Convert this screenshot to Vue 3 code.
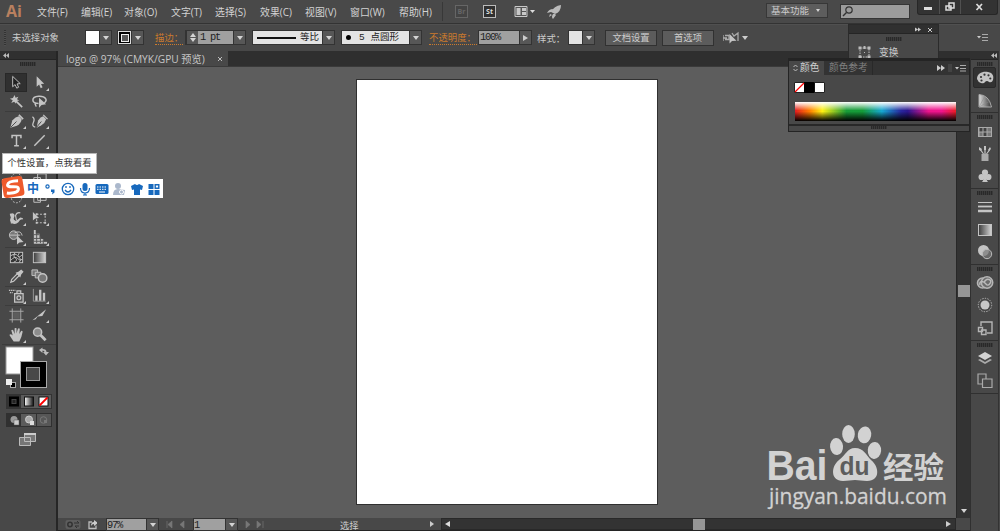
<script setup>
const menus = [
  ['文件(F)', 44], ['编辑(E)', 43], ['对象(O)', 47], ['文字(T)', 44], ['选择(S)', 45],
  ['效果(C)', 45], ['视图(V)', 45], ['窗口(W)', 49], ['帮助(H)', 46]
]

const light = '#c4c4c4'
const art = {
  select: `<path d="M6 2.5V13.5L8.6 11.2L10.3 15L12.3 14L10.6 10.5L14 10.2Z" fill="#222" stroke="${light}"/>`,
  direct: `<path d="M6 2.5V13.5L8.6 11.2L10.3 15L12.3 14L10.6 10.5L14 10.2Z" fill="${light}"/>`,
  wand: `<path d="M7 2l1 3 3-1-1.500 2.500 2.500 1.500-3 .5-.5 3-2-2.200-3 1.200 1.500-2.800L2 6l3.200-.7z" fill="${light}"/><path d="M8 8l7 7" stroke="${light}" stroke-width="1.800"/>`,
  lasso: `<path d="M8 11C0 11 0 4 8 3.500S18 8 14 10.500M5 10.500c-2 1 1 2 0 4" fill="none" stroke="${light}" stroke-width="1.600"/><path d="M8.500 5v10.500l2.700-2.700 4.800-.8z" fill="${light}"/>`,
  pen: `<path d="M2.500 15.500L4.500 8Q8 4 11.500 3.500L14.500 6.500Q14 10.500 9.500 13.500Z" fill="${light}"/><path d="M3 15l6-6" stroke="#484848"/><path d="M11.500 2l4.500 4.500" stroke="${light}" stroke-width="1.700"/>`,
  curve: `<path d="M6 15.500L7.500 8Q10 4 13 3.500L16 6.500Q15 10.500 11 13Z" fill="${light}"/><path d="M6 15l5-6" stroke="#484848"/><path d="M1.500 4q3 2 1 6t2 5M13 2l4.500 4.500" fill="none" stroke="${light}" stroke-width="1.400"/>`,
  type: `<path d="M4.300 6.500V3.700h9.400v2.800M9 4v10.500M6.500 14.500h5" fill="none" stroke="${light}" stroke-width="1.600"/>`,
  line: `<path d="M3.500 14.500L14.500 3.500" stroke="${light}" stroke-width="1.500"/>`,
  brush: `<path d="M3 15q1-6 6-6l6-6-5 8q-1 4-7 4" fill="${light}"/>`,
  pencil: `<path d="M4 14l2-5 7-6 2 2-7 7z" fill="${light}"/>`,
  rotate: `<circle cx="9" cy="8" r="5.500" fill="none" stroke="${light}" stroke-dasharray="2 1.500"/>`,
  scale: `<path d="M3 7h7v6H3zM7 3h9v8H7z" fill="none" stroke="${light}"/>`,
  warp: `<path d="M2 4q5-2 5 2L6 9q0 3 3 2l4-3q3 0 3 2-3-1-5 3-3 3-7 1-3-2-1-6L2 5" fill="${light}"/><path d="M9 11l-1-5q1-4 5-3M3 14l4-3" fill="none" stroke="${light}" stroke-width="1.200"/>`,
  free: `<path d="M2 2v9l2.500-2 4-.5z" fill="${light}"/><path d="M6 4.500h9v9H6z" fill="none" stroke="${light}" stroke-dasharray="2 1.600"/><path d="M5 3.500h2v2H5zm9 0h2v2h-2zm-9 9h2v2H5zm9 0h2v2h-2z" fill="${light}"/>`,
  shape: `<circle cx="6" cy="6.500" r="4.500" fill="#777" stroke="${light}"/><path d="M2 6.500h11M7 4q7-3 8 3" fill="none" stroke="${light}"/><path d="M9.500 7v9.500l2.600-2.200 4.400-.5z" fill="${light}"/>`,
  perspective: `<path d="M3 1v14.500h14v-2h-4v-3H9V5H5V1z" fill="${light}"/><path d="M3 6h6M3 10h9M3 13h14M6 4v11M10 8v7M13 11v5" stroke="#555"/>`,
  mesh: `<rect x="2.500" y="3.500" width="13" height="11" fill="#353535" stroke="${light}"/><path d="M3 7q5-3 7 0t5-1M3 12q4-5 7-2t5 1M7 4q-2 4 1 6t-2 4M12 4q-3 3 0 5t0 5" fill="none" stroke="${light}"/>`,
  gradient: `<defs><linearGradient id="tg"><stop stop-color="#3b3b3b"/><stop offset="1" stop-color="#d5d5d5"/></linearGradient></defs><rect x="2.500" y="3.500" width="13" height="11" fill="url(#tg)" stroke="${light}"/>`,
  dropper: `<path d="M3 15l1-3 6-6 2 2-6 6z" fill="none" stroke="${light}" stroke-width="1.300"/><path d="M8 5l3-1 3-2.500 2.500 2.500-2.500 3-1 3z" fill="${light}"/>`,
  blend: `<path d="M1 2h6v6H1z" fill="#777" stroke="${light}"/><path d="M4.500 4.500h6v6h-6z" fill="#777" stroke="${light}"/><circle cx="12.300" cy="10.500" r="4.500" fill="#777" stroke="${light}" stroke-width="1.500"/>`,
  spray: `<path d="M7 7h9v9H7zM9.500 4h4v3h-4z" fill="#595959" stroke="${light}" stroke-width="1.300"/><circle cx="11.500" cy="11.500" r="2" fill="none" stroke="${light}" stroke-width="1.300"/><path d="M1 3.500h7M2 6h3" stroke="${light}" stroke-width="1.400" stroke-dasharray="1.500 .7"/>`,
  graph: `<path d="M2.500 2v13h13" fill="none" stroke="#999"/><path d="M4.500 9h2.500v5.500H4.500zm4-6h2.500v11.500H8.500zM12.500 6h2.500v8.500h-2.500z" fill="${light}"/>`,
  artboard: `<path d="M4.500 1.500v15M13.500 1.500v15M1.500 4.500h15M1.500 13.500h15" stroke="#aaa"/><path d="M5.500 5.500h7v7h-7z" fill="#5d5d5d"/>`,
  slice: `<path d="M1.500 14L16 2.500l-4 7-5 .5-2 3z" fill="${light}"/>`,
  hand: `<path d="M6 16.500Q3 12 1.500 9.500q1-1.500 3.500.5L3.500 4.500q1-1 2 0L7 8.500V2.500q1-1 2 0v5.500l1.500-5q1-1 2 0L12 8.500l2-3.500q1.500 0 1.500 1-1 6-3.500 10.500z" fill="${light}"/>`,
  zoom: `<circle cx="7" cy="6.500" r="4.300" fill="#8d8d8d" stroke="${light}" stroke-width="1.600"/><path d="M10 9.500l5.500 5.500" stroke="${light}" stroke-width="3"/>`,
  palette: `<path d="M1 10C1 4 7 2 12 3s6 4 5 8q-1 3-4 2-2-2-4 0-1 2-4 1t-4-4" fill="${light}"/><g fill="#343434"><circle cx="5" cy="8" r="1.100"/><circle cx="8.500" cy="5.700" r="1.100"/><circle cx="12.500" cy="6.300" r="1.100"/><circle cx="14.300" cy="9.500" r="1.100"/><circle cx="5.500" cy="11.500" r="1.100"/></g>`,
  guide: `<defs><linearGradient id="gg" x1="0" x2="1"><stop stop-color="#ddd"/><stop offset="1" stop-color="#333"/></linearGradient></defs><path d="M3 2.500Q13 3 15.500 15H3z" fill="url(#gg)" stroke="#aaa"/><path d="M3 15L9 4M3 15l11-6" stroke="#888" stroke-width=".5"/>`,
  swatches: `<rect x="2" y="4" width="14" height="10" fill="#aaa"/><path d="M3.500 5h3v3.500h-3zm4 0h3v3.500h-3zm0 4.500h3V13h-3z" fill="#424242"/><path d="M11.500 5h3.500v3.500h-3.500zM3.500 9.500h3V13h-3zm8 0H15V13h-3.500z" fill="#777"/>`,
  brushes: `<path d="M5.500 9h7v7h-7z" fill="#aaa"/><path d="M7.500 9L4 4M9 9V3M10.500 9l3-4" stroke="${light}" stroke-width="1.200"/><path d="M3 2l3 2-1 2-2-1zm5-1h2v4H8zm6 1l1 2-2 2-1-1z" fill="${light}"/>`,
  club: `<g fill="${light}"><circle cx="9" cy="5.500" r="3.100"/><circle cx="5.600" cy="10" r="3.100"/><circle cx="12.400" cy="10" r="3.100"/><path d="M8 8h2q0 5 2 7H6q2-2 2-7"/></g>`,
  stroke: `<path d="M2 4.500h14" stroke="${light}"/><path d="M2 8.500h14" stroke="${light}" stroke-width="1.800"/><path d="M2 13h14" stroke="${light}" stroke-width="2.500"/>`,
  transparency: `<circle cx="7.500" cy="7.500" r="5.500" fill="#c4c4c4"/><circle cx="11" cy="11" r="4.700" fill="#777" fill-opacity=".7" stroke="#bbb"/>`,
  cc: `<rect x="1.500" y="4" width="10" height="10" rx="5" fill="#6c6c6c" stroke="#b5b5b5" stroke-width="1.600"/><circle cx="11" cy="8.500" r="5.700" fill="#6c6c6c" stroke="#b5b5b5" stroke-width="1.600"/><path d="M4 11q-1-3 2-3.500 2 0 4 2.500t4-.5-1-4q-3-1-5 3" fill="none" stroke="#bbb" stroke-width="1.400"/>`,
  appearance: `<circle cx="9" cy="9" r="4.500" fill="#c8c8c8"/><circle cx="9" cy="9" r="6.700" fill="none" stroke="#bbb" stroke-dasharray="1.300 1.300"/>`,
  styles: `<path d="M5 7V3h11v11h-5M2.500 8.500h4v4h-4zM5.500 11h4.500v4.500H5.500z" fill="none" stroke="#b5b5b5" stroke-width="1.400"/>`,
  layers: `<path d="M9 2l7 4-7 4-7-4z" fill="#d4d4d4"/><path d="M2 10l7 4 7-4-2-1-5 3-5-3z" fill="#aaa"/>`,
  boards: `<path d="M2 2h8v10H2z" fill="#484848" stroke="#aaa" stroke-width="1.200"/><path d="M6.500 7h9.500v8.500H6.500z" fill="#484848" stroke="#aaa" stroke-width="1.200"/>`
}

const tools = [
  ['select', 'direct'], ['wand', 'lasso'], ['pen', 'curve'], ['type', 'line'],
  ['brush', 'pencil'], ['rotate', 'scale'], ['rotate', 'scale'], ['warp', 'free'],
  ['shape', 'perspective'], ['mesh', 'gradient'], ['dropper', 'blend'], ['spray', 'graph'],
  ['artboard', 'slice'], ['hand', 'zoom']
]
const ruled = [2, 9, 11, 12]
const plain = ['select', 'wand', 'lasso', 'mesh', 'gradient', 'blend', 'artboard', 'zoom']
const dock = [
  ['palette', 'guide'], ['swatches', 'brushes', 'club'], ['stroke', 'gradient', 'transparency'],
  ['cc', 'appearance', 'styles'], ['layers', 'boards']
]
</script>

<template>
  <div class="app">
    <header class="menubar">
      <span class="brand">Ai</span>
      <nav><span v-for="m in menus" :key="m[0]" :style="{ width: m[1] + 'px' }">{{ m[0] }}</span></nav>
      <div class="apps">
        <span class="badge dim">Br</span><span class="badge">St</span>
        <svg class="arrange" width="22" height="14"><path d="M1 1.500h12v10H1z" fill="#555" stroke="#c8c8c8"/><path d="M2.500 3h4v7h-4zM8 3h4v3H8zM8 7h4v3H8z" fill="#c8c8c8"/><path d="M16 5h5l-2.500 3z" fill="#ddd"/></svg>
        <svg class="rocket" width="15" height="14"><path d="M14 0Q7 1 4 7l4 2Q14 7 14 0M0 8q2-4 6-4L4 7M8 9l1 1-3 4q-2-2 0-5M3 9l2 1-3 2z" fill="#bbb"/></svg>
      </div>
      <div class="menu-right">
        <span class="workspace">基本功能<i class="down"></i></span>
        <span class="search"><svg width="14" height="13"><circle cx="8" cy="5" r="3.200" fill="none" stroke="#333" stroke-width="1.200"/><path d="M5.500 7.500L2 11" stroke="#333" stroke-width="1.500"/></svg></span>
        <div class="window-buttons">
          <span class="min"><svg width="8" height="4"><path d="M0 0h8v3H0z" fill="#ddd"/></svg></span>
          <span><svg width="11" height="10"><path d="M4 1h5v5H4zM1 4h5v4H1z" fill="#333" stroke="#ddd" stroke-width="1.500"/></svg></span>
          <span class="shut"><svg width="9" height="8"><path d="M1.500 1l5.500 6M7 1L1.500 7" stroke="#ddd" stroke-width="1.700"/></svg></span>
        </div>
      </div>
    </header>

    <section class="control">
      <i class="vgrip"></i>
      <span class="status">未选择对象</span>
      <span class="box fill"><b class="white"></b><em><i class="down"></i></em></span>
      <span class="box outline"><b class="black"></b><em><i class="down"></i></em></span>
      <span class="link l1">描边：</span>
      <span class="box weight"><em class="spin"><i class="up"></i><i class="down"></i></em><b class="gray">1 pt</b><em><i class="down"></i></em></span>
      <span class="box profile"><b class="pale"><u></u>等比</b><em><i class="down"></i></em></span>
      <span class="box brush"><b class="pale"><s></s>5 点圆形</b><em><i class="down"></i></em></span>
      <span class="link l2">不透明度：</span>
      <span class="box opacity"><b class="gray">100%</b><em><i class="right"></i></em></span>
      <span class="label">样式：</span>
      <span class="box style"><b class="pale"></b><em><i class="down"></i></em></span>
      <span class="button">文档设置</span>
      <span class="button">首选项</span>
      <svg class="align" width="26" height="14"><path d="M0 4v6M0 7h4M2 4.500h4v4H2M9 2l2 3 4-3v8" fill="none" stroke="#aaa" stroke-width="1.300"/><path d="M6.500 3v9.500l2.500-2.500 4.500-.3z" fill="#c4c4c4"/><path d="M19 5h6l-3 4z" fill="#ccc"/></svg>
      <svg class="list" width="12" height="9"><path d="M0 3h4L2 5.500z" fill="#ccc"/><path d="M5 1.500h6M5 4.500h6M5 7.500h6" stroke="#aaa"/></svg>
    </section>

    <main>
      <aside class="toolbox">
        <div class="cap"><svg width="6" height="5"><path d="M3 0v5L0 2.500zM6 0v5L3 2.500z" fill="#bbb"/></svg></div>
        <i class="grip"></i>
        <div class="tools">
          <div v-for="(row, r) in tools" :key="r" class="tool-row" :class="{ ruled: ruled.includes(r) }">
            <span v-for="t in row" :key="t" class="tool" :class="{ active: t === 'select', more: !plain.includes(t) }"><svg width="17" height="17" viewBox="0 0 18 18" v-html="art[t]"></svg></span>
          </div>
        </div>
        <svg class="paint" width="54" height="106">
          <g>
            <rect x="4" y="2" width="27" height="27" fill="#fff" stroke="#999"/>
            <rect x="18.500" y="16.500" width="26" height="26" fill="#000" stroke="#aaa"/>
            <rect x="24.500" y="22.500" width="13" height="13" fill="#484848" stroke="#999"/>
            <path d="M37 5l3.500-2.500v1.500q4 0 4 3H47l-3 3.500-3-3.500h1.500q0-1.500-2-1.500V8z" fill="#bbb"/>
            <rect x="8.500" y="37.500" width="5" height="5" fill="#000" stroke="#aaa"/><rect x="4" y="34" width="6" height="6" fill="#eee"/>
          </g>
          <g>
            <rect x="4" y="49" width="46" height="15" fill="#333"/><rect x="19" y="50" width="30" height="13" fill="#5b5b5b"/>
            <rect x="7" y="51.500" width="10" height="10" fill="#000"/><rect x="10" y="54.500" width="4" height="4" fill="#222" stroke="#444"/>
            <rect x="22.500" y="52" width="9" height="9" fill="url(#mini)" stroke="#111"/>
            <rect x="37" y="52" width="9" height="9" fill="#fff" stroke="#111"/><path d="M37.500 60.500l8-8" stroke="red" stroke-width="1.800"/>
          </g>
          <g>
            <rect x="4" y="68" width="46" height="14" fill="#303030"/><rect x="19" y="69" width="15" height="12" fill="#5b5b5b"/><rect x="35" y="69" width="14" height="12" fill="#575757"/>
            <circle cx="12" cy="74.500" r="3.500" fill="#999"/><path d="M12 75h5v5h-5z" fill="#ccc" stroke="#555" stroke-width=".5"/>
            <circle cx="27" cy="74.500" r="3.500" fill="#aaa" stroke="#ccc"/><path d="M28 76h4v4h-4z" fill="#ddd"/>
            <circle cx="41.500" cy="75" r="3.300" fill="none" stroke="#777"/><path d="M42 75h3v3h-3z" fill="#777"/>
          </g>
          <path d="M17.500 92.500h11v8h-11zM22.500 88.500h11v8h-11z" fill="#777" stroke="#bbb"/><path d="M22 88h12v2H22z" fill="#ccc"/>
          <defs><linearGradient id="mini"><stop stop-color="#fff"/><stop offset="1" stop-color="#111"/></linearGradient></defs>
        </svg>
      </aside>

      <section class="document">
        <div class="tabs"><span>logo @ 97% (CMYK/GPU 预览)<svg width="6" height="6"><path d="M1 1l4 4M5 1L1 5" stroke="#bbb"/></svg></span></div>
        <div class="stage"><div class="canvas"><div class="page"></div></div><div class="vscroll"><i class="thumb"></i><i class="down big"></i></div></div>
        <footer>
          <svg class="sync" width="32" height="13"><rect x=".5" y="2" width="15" height="9" rx="2" fill="#5d5d5d"/><circle cx="5" cy="6.500" r="2.200" fill="none" stroke="#333" stroke-width="1.500"/><path d="M9 5h5l-2-2M14 8h-4l2 2" fill="none" stroke="#333"/><path d="M31 7.500v3h-7V4h3" fill="none" stroke="#bbb" stroke-width="1.300"/><path d="M26 8q0-4 3-4V2l4 3-4 3V6q-2 0-3 2" fill="#ccc"/></svg>
          <span class="box percent"><b class="gray">97%</b><em><i class="down big"></i></em></span>
          <svg width="33" height="13" class="nav"><path d="M7 3v7M12 3v7L8 6.500zM24 3v7l-4-3.500z" fill="#777" stroke="#777" stroke-width=".7"/></svg>
          <span class="box pageno"><b class="gray">1</b><em><i class="down big"></i></em></span>
          <svg width="34" height="13" class="nav"><path d="M7 3v7l4-3.500zM18 3v7l4-3.500zM24 3v7" fill="#777" stroke="#777" stroke-width=".7"/></svg>
          <span class="mode">选择</span>
          <i class="right"></i>
          <div class="hscroll"><i class="left"></i><i class="thumb"></i><i class="right"></i></div>
          <div class="corner"></div>
        </footer>
      </section>

      <aside class="dock">
        <div class="cap"><svg width="6" height="5"><path d="M3 0v5L0 2.500zM6 0v5L3 2.500z" fill="#bbb"/></svg></div>
        <div v-for="(g, i) in dock" :key="i" class="dock-group">
          <i class="grip"></i>
          <span v-for="n in g" :key="n" :class="{ chosen: n === 'palette' }"><svg width="18" height="18" viewBox="0 0 18 18" v-html="art[n]"></svg></span>
        </div>
      </aside>
    </main>

    <div class="transform-panel">
      <div class="cap"><svg width="21" height="6"><path d="M1 .5v4l3-2zM4 .5v4l3-2z" fill="#ccc"/><path d="M14 1l4 4M18 1l-4 4" stroke="#ccc"/></svg></div>
      <i class="grip"></i>
      <div class="item"><svg width="13" height="13"><path d="M2 2h9v9H2z" fill="none" stroke="#bbb" stroke-dasharray="1.500 1"/><path d="M.5.5h3v3h-3zm9 0h3v3h-3zm-9 9h3v3h-3zm9 0h3v3h-3zM5.500 0h2v3h-2zM6 6h1v1H6z" fill="#bbb"/></svg>变换</div>
    </div>

    <div class="color-panel">
      <div class="panel-tabs">
        <span class="on"><svg width="5" height="8"><path d="M.5 3l2-2 2 2M.5 5l2 2 2-2" fill="none" stroke="#bbb"/></svg>颜色</span><span class="off">颜色参考</span>
        <svg class="controls" width="33" height="10"><path d="M1 2v6l4-3zM5 2v6l4-3zM19 4h4l-2 2.500z" fill="#ccc"/><path d="M13 1v8M15 1v8" stroke="#555"/><path d="M24 2.500h6M24 5.500h6M24 8h6" stroke="#aaa"/></svg>
      </div>
      <div class="panel-body">
        <svg width="32" height="12"><path d="M.5.5h10v10H.5zM20.500.5h10v10h-10z" fill="#fff" stroke="#222"/><path d="M10 0h10.500v11H10z"/><path d="M1 10L10 1" stroke="red" stroke-width="1.200"/></svg>
        <div class="spectrum"></div>
      </div>
      <div class="panel-foot"><i class="grip"></i></div>
    </div>

    <div class="tip">个性设置，点我看看</div>
    <div class="ime">
      <svg width="24" height="24" viewBox="0 0 24 24" class="sogou"><g transform="rotate(-9 12 12)"><rect x="1.500" y="2" width="21" height="20" rx="3.500" fill="#ee5a2c"/><path d="M18 6.500Q8 5 7 9c-1 4 11 1 10 6-1 4-9 3-12 2" fill="none" stroke="#fff" stroke-width="3"/></g></svg>
      <span><b>中</b></span>
      <span><svg width="12" height="14"><circle cx="3.500" cy="4.500" r="1.600" fill="none" stroke="#1769bd" stroke-width="1.200"/><path d="M7 7.500h3.500v3L8 12.500 8.500 10H7z" fill="#1769bd"/></svg></span>
      <span><svg width="14" height="14" fill="none" stroke="#1769bd" stroke-width="1.300"><circle cx="7" cy="7" r="5.700"/><path d="M4 8q3 4 6 0M5 4v2M9 4v2"/></svg></span>
      <span><svg width="12" height="14"><rect x="3.500" y="1" width="5" height="8" rx="2.500" fill="#1769bd"/><path d="M1.500 6q0 5 4.500 5t4.500-5M6 11v2M4 13h4" fill="none" stroke="#1769bd" stroke-width="1.200"/></svg></span>
      <span><svg width="14" height="14"><rect x=".5" y="2" width="13" height="10" rx="1.500" fill="#1769bd"/><path d="M2 5h10M2 7.300h10" stroke="#fff" stroke-dasharray="1.500 1"/><path d="M4 10h6" stroke="#fff"/></svg></span>
      <span><svg width="14" height="14" fill="#abb8cc"><circle cx="6" cy="4" r="3"/><path d="M1 13q0-6 5-6l7 1-1 5z"/><circle cx="9.500" cy="10" r="2" stroke="#fff"/></svg></span>
      <span><svg width="12" height="14"><path d="M4 2q2 2 4 0l4 2-1 4-2-.5V13H3V7.500L1 8 0 4z" fill="#1769bd"/></svg></span>
      <span><svg width="12" height="14" fill="#1769bd"><path d="M.5 2h5v5h-5zm0 6h5v5h-5zm6 0h5v5h-5z"/><path d="M7.200 2.700h3.600v3.600H7.200z" fill="#fff" stroke="#1769bd" stroke-width="1.400"/></svg></span>
    </div>

    <svg class="watermark" width="190" height="95" viewBox="0 0 190 95" fill="#d2d2d2">
      <text x="5.500" y="60" class="bai" textLength="61" lengthAdjust="spacingAndGlyphs">Bai</text>
      <ellipse cx="75.500" cy="26.500" rx="6.500" ry="8.500" transform="rotate(-5 76 26)"/>
      <ellipse cx="87.500" cy="14" rx="6.300" ry="9"/>
      <ellipse cx="103.500" cy="15" rx="6.700" ry="8.500" transform="rotate(10 104 15)"/>
      <ellipse cx="113.500" cy="30.500" rx="6.700" ry="8.500" transform="rotate(5 114 30)"/>
      <path d="M94 28c9 0 11 7 16 12 8 6 10 21-4 21-5 0-8-1-12-1s-7 1-12 1c-13 0-12-15-4-21 7-5 8-12 16-12"/>
      <text x="78.500" y="55" class="du" textLength="30" lengthAdjust="spacingAndGlyphs">du</text>
      <text x="122" y="58" class="cn" textLength="61" lengthAdjust="spacingAndGlyphs">经验</text>
      <text x="8" y="83.500" class="url" textLength="178" lengthAdjust="spacingAndGlyphs">jingyan.baidu.com</text>
    </svg>
  </div>
</template>

<style>
body { margin: 0; overflow: hidden; background: #484848; }
</style>
<style scoped>
* { box-sizing: border-box; }
svg { display: block; flex: none; }
i { display: block; flex: none; }
.app { position: relative; width: 1000px; height: 531px; display: flex; flex-direction: column; overflow: hidden; background: #484848; color: #ccc; font: 9.5px "Open Sans", "Noto Sans CJK SC", sans-serif; white-space: nowrap; }
.menubar { height: 24px; flex: none; display: flex; border-bottom: 1px solid #333; background: #494949; }
.brand { width: 37px; padding-left: 6px; font: bold 16px/22px "Open Sans", sans-serif; color: #b9805f; }
.menubar nav { display: flex; line-height: 24px; font-size: 9.9px; color: #d3d3d3; }
.apps { display: flex; align-items: center; margin-left: -3px; border-left: 1px solid #383838; height: 19px; margin-top: 2px; padding-left: 12px; }
.badge { width: 13px; height: 13px; border: 1px solid #bbb; background: #303030; color: #ddd; font: bold 7px/11px "Open Sans", sans-serif; text-align: center; margin-right: 15px; }
.badge.dim { border-color: #666; color: #666; background: #444; }
.arrange { margin-left: 3px; }
.rocket { margin-left: 11px; }
.menu-right { margin-left: auto; display: flex; }
.workspace { display: flex; align-items: center; justify-content: space-between; width: 62px; height: 15px; margin: 3px 12px 0 0; padding: 0 7px 1px 4px; background: #5d5d5d; border: 1px solid #373737; font-size: 9.5px; }
.search { width: 70px; height: 15px; margin: 4px 7px 0 0; background: #9c9c9c; border: 1px solid #353535; }
.window-buttons { display: flex; width: 81px; height: 15px; margin-right: 2px; background: #333; border: 1px solid #272727; border-top: 0; border-radius: 0 0 3px 3px; }
.window-buttons span { width: 22px; display: flex; align-items: center; justify-content: center; border-right: 1px solid #505050; }
.window-buttons .min { align-items: flex-end; padding-bottom: 3px; }
.window-buttons .shut { width: 36px; border: 0; }

.down, .up { width: 0; height: 0; border: solid transparent; border-width: 4px 3px 0; border-top-color: #d4d4d4; }
.up { border-width: 0 3px 4px; border-bottom-color: #d4d4d4; }
.workspace .down { border-width: 3px 2.500px 0; }
.right { width: 0; height: 0; border-left: 5px solid #ccc; border-top: 3.500px solid transparent; border-bottom: 3.500px solid transparent; }
.left { width: 0; height: 0; border-right: 5px solid #ddd; border-top: 3.500px solid transparent; border-bottom: 3.500px solid transparent; }
.big { border-top-width: 4px; border-left-width: 3.500px; border-right-width: 3.500px; }
.control { height: 27px; flex: none; display: flex; align-items: center; font-size: 9.4px; padding: 0 11px 1px 4px; border-top: 1px solid #505050; }
.vgrip { width: 2px; height: 16px; background: repeating-linear-gradient(#333 0 1px, #505050 1px 2px); }
.status { width: 73px; margin-left: 6px; padding-bottom: 2px; }
.box { display: flex; height: 15px; border: 1px solid #333; background: #333; flex: none; }
.box b { flex: 1; font: 10.400px/13px "Liberation Mono", "Noto Sans CJK SC", monospace; color: #222; overflow: hidden; }
.box em { width: 11px; display: flex; flex-direction: column; align-items: center; justify-content: center; background: #575757; margin-left: 1px; }
.fill, .outline { width: 27px; margin-right: 5px; }
.white { background: #fff; }
.black { background: #000; border: 1px solid #ddd; display: flex; align-items: center; justify-content: center; }
.black::after { content: ""; width: 6px; height: 6px; background: #555; border: 1.500px solid #eee; }
.link { color: #cb7b2e; border-bottom: 1px dotted #cb7b2e; height: 14px; line-height: 14px; }
.l1 { width: 28px; margin-left: 6px; }
.weight { width: 61px; margin-left: 2px; }
.weight b { padding-left: 2px; letter-spacing: -1.200px; }
.spin { gap: 1px; margin: 0; }
.gray { background: #a0a0a0; }
.pale { background: #e3e3e3; }
.profile { width: 83px; margin-left: 6px; }
.profile b, .brush b { display: flex; align-items: center; padding-left: 4px; font-size: 9.500px; }
.profile u { width: 39px; height: 2px; background: #111; margin-right: 4px; }
.brush { width: 81px; margin-left: 6px; }
.brush s { width: 5px; height: 5px; border-radius: 50%; background: #000; margin-right: 8px; }
.l2 { margin-left: 7px; width: 48px; }
.opacity { width: 54px; margin-left: 1px; }
.opacity b { padding-left: 1px; letter-spacing: -1.200px; }
.label { width: 31px; margin-left: 5px; }
.style { width: 27px; margin-right: 10px; }
.button { width: 52px; height: 16px; line-height: 13px; text-align: center; background: #5c5c5c; border: 1px solid #313131; margin-right: 5px; font-size: 9.3px; }
.align { margin-left: 4px; }
.list { margin-left: auto; }

main { flex: 1; display: flex; min-height: 0; }
.cap { height: 9px; background: #303030; border-bottom: 1px solid #252525; padding: 2px 3px; flex: none; }
.grip { width: 16px; height: 4px; margin: 2px auto; background: repeating-linear-gradient(90deg, #292929 0 1px, #3a3a3a 1px 2px); }
.toolbox { width: 58px; flex: none; border-right: 2px solid #262626; background: #484848; }
.toolbox .grip { margin-bottom: 6.300px; }
.tool-row { height: 19.400px; display: flex; margin: 0 5px; border-top: 1px solid transparent; }
.ruled { border-color: #3c3c3c; }
.tool { width: 23.500px; height: 18.400px; position: relative; display: flex; align-items: center; justify-content: center; }
.active { background: #303030; border: 1px solid #282828; width: 22px; margin-right: 1.500px; }
.more::after { content: ""; position: absolute; right: 2px; bottom: 1px; border-left: 3px solid transparent; border-bottom: 3px solid #ccc; }
.paint { margin-left: 2px; border-top: 1px solid #3c3c3c; }

.document { width: 912px; flex: none; display: flex; flex-direction: column; }
.tabs { height: 15px; flex: none; display: flex; background: #2f2f2f; }
.tabs span { width: 170px; height: 15px; padding: 0 5px 0 8px; display: flex; align-items: center; justify-content: space-between; background: #484848; font-size: 10.200px; color: #c6c6c6; }
.stage { flex: 1; display: flex; }
.canvas { width: 898px; background: #5d5d5d; border-top: 1px solid #3a3a3a; padding: 13px 0 0 298px; }
.page { width: 302px; height: 426px; background: #fff; border: 1px solid #303030; margin-top: -1px; }
.vscroll { width: 14px; background: #333; border-left: 1px solid #282828; display: flex; flex-direction: column; align-items: center; }
.vscroll .thumb { width: 12px; height: 12px; margin-top: 219px; background: #969696; }
.vscroll .big { margin-top: auto; margin-bottom: 5px; }
footer { height: 13px; flex: none; display: flex; background: #484848; border-bottom: 1px solid #242424; }
.sync { margin: 0 9px 0 7px; }
footer .box { height: 13px; }
footer .gray { line-height: 12px; letter-spacing: -1.200px; }
.percent { width: 53px; }
.nav { margin-left: 1px; }
.pageno { width: 45px; }
.mode { width: 147px; padding-left: 67px; font-size: 9.300px; line-height: 15px; flex: none; }
footer > .right { margin: 3px 6px 0 10px; border-left-width: 4px; }
.hscroll { margin-left: auto; flex: none; width: 515px; background: #333; border: 1px solid #292929; display: flex; align-items: center; padding: 0 4px 0 3px; }
.hscroll .thumb { width: 12px; height: 11px; margin-left: 243px; background: #969696; }
.hscroll .right { margin-left: auto; }
.corner { width: 14px; flex: none; }
.dock { width: 29px; border-left: 1px solid #303030; border-right: 1px solid #333; background: #484848; }
.dock .cap { padding-left: 20px; }
.dock-group { border-bottom: 1px solid #303030; padding-bottom: .600px; }
.dock-group .grip { margin: 2px auto 1px; }
.dock-group > span { height: 22.400px; display: flex; align-items: center; justify-content: center; }
.dock-group .chosen { height: 21px; margin: 0 2px 1.400px; background: #323232; border: 1px solid #292929; border-radius: 2px; }

.transform-panel { position: absolute; left: 848px; top: 24px; width: 91px; height: 40px; background: #484848; border: 1px solid #2b2b2b; }
.transform-panel .cap { padding-left: 65px; }
.transform-panel .grip { margin-top: 3px; }
.item { display: flex; align-items: center; padding-left: 9px; gap: 8px; margin-top: 4px; height: 14px; font-size: 9.700px; }
.color-panel { position: absolute; left: 788px; top: 58px; width: 182px; height: 74px; background: #484848; border: 1px solid #242424; border-top-width: 3px; }
.panel-tabs { height: 14px; display: flex; align-items: center; background: #333; line-height: 14px; font-size: 9.700px; }
.on { width: 35px; height: 14px; background: #484848; display: flex; align-items: center; gap: 2px; padding-left: 4px; color: #d1d1d1; }
.off { color: #808080; padding-left: 5px; width: 49px; border-right: 1px solid #292929; }
.controls { margin-left: auto; }
.panel-body { height: 51px; padding: 7px 0 0 5px; border-bottom: 2px solid #282828; }
.spectrum { width: 161px; height: 19px; margin: 8px 0 0 1px; background: linear-gradient(#fff 0, transparent 45%, transparent 50%, #000 100%), linear-gradient(90deg, #e31b20 0, #ff7d00 9%, #fff112 17%, #179b38 32%, #149b39 42%, #16a7d0 54%, #28269d 66%, #2b168e 70%, #ec148b 83%, #f0148d 91%, #ed1c24 100%); }
.panel-foot .grip { margin-top: 0; height: 3px; }
.tip { position: absolute; left: 2px; top: 153px; width: 95px; height: 21px; background: #fff; border: 1px solid #b7b7b7; color: #333; line-height: 18px; text-align: center; font-size: 9.400px; }
.ime { position: absolute; left: 2px; top: 179px; width: 161px; height: 19px; background: #fff; display: flex; align-items: center; padding-left: 22.300px; }
.ime span { width: 17.300px; flex: none; display: flex; justify-content: center; }
.sogou { position: absolute; left: -1px; top: -4px; }
.ime b { color: #1769bd; font-size: 12px; line-height: 18px; }
.watermark { position: absolute; left: 761px; top: 420px; }
.bai { font: bold 42px "Liberation Sans", sans-serif; }
.du { font: bold 25px "Liberation Sans", sans-serif; fill: #5d5d5d; }
.cn { font: bold 30px "Noto Sans CJK SC", sans-serif; }
.url { font: 21px "Open Sans", sans-serif; stroke: #d2d2d2; stroke-width: .3px; }
</style>
